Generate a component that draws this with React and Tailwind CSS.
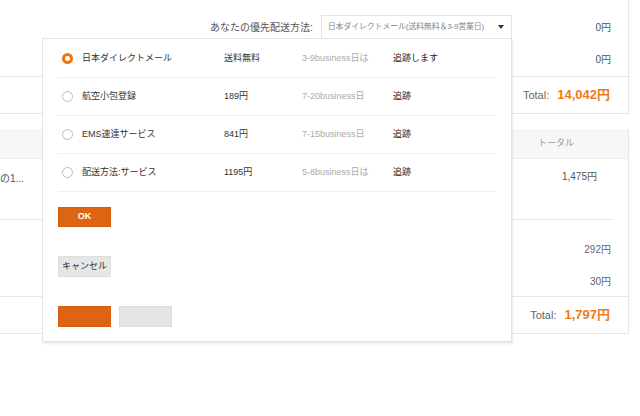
const font = { fontFamily: '"Liberation Sans", "Noto Sans CJK JP", sans-serif' };

const options = [
  { name: "日本ダイレクトメール", price: "送料無料", days: "3-9business日は", track: "追跡します", checked: true },
  { name: "航空小包登録", price: "189円", days: "7-20business日", track: "追跡" },
  { name: "EMS速達サービス", price: "841円", days: "7-15business日", track: "追跡" },
  { name: "配送方法:サービス", price: "1195円", days: "5-8business日は", track: "追跡" },
];

function Radio({ checked }) {
  if (checked) {
    return <span className="block w-[11px] h-[11px] rounded-full border-[3px] border-[#ee7611] bg-white" />;
  }
  return <span className="block w-[11px] h-[11px] rounded-full border border-[#bcbcbc] bg-white" />;
}

export default function App() {
  return (
    <div className="relative w-[640px] h-[416px] bg-white overflow-hidden text-[#333]" style={font}>
      {/* top summary box */}
      <div className="w-[629px] border-r border-b border-[#e6e6e6]">
        <div className="pt-[15px] pb-[5px] border-b border-[#e6e6e6]">
          <div className="flex items-center h-[24px]">
            <span className="ml-[210px] text-[10px] text-[#555]">あなたの優先配送方法:</span>
            <div className="ml-[8px] w-[191px] h-[24px] border border-[#e3e3e3] flex items-center pl-[6px] pr-[7px]">
              <span className="flex-1 min-w-0 overflow-hidden text-[8px] tracking-[-0.2px] text-[#888] whitespace-nowrap">日本ダイレクトメール(送料無料＆3-9営業日)</span>
              <span className="ml-[6px] shrink-0 w-0 h-0 border-l-[3px] border-r-[3px] border-t-[4px] border-l-transparent border-r-transparent border-t-[#333]" />
            </div>
            <span className="ml-auto mr-[17px] text-[10px] text-[#555]">0円</span>
          </div>
          <div className="flex items-center justify-end h-[24px] mt-[8px]">
            <span className="mr-[17px] text-[10px] text-[#555]">0円</span>
          </div>
        </div>
        <div className="h-[36px] flex items-center justify-end pr-[18px]">
          <span className="text-[11px] text-[#666]">Total:</span>
          <span className="ml-[8px] text-[13px] font-bold text-[#f07a1a]">14,042円</span>
        </div>
      </div>

      {/* order box */}
      <div className="mt-[15px] w-[629px] border-r border-b border-[#e6e6e6]">
        <div className="h-[30px] bg-[#f7f7f7] border-b border-[#ececec] flex items-center">
          <span className="ml-[538px] text-[9px] text-[#999]">トータル</span>
        </div>
        <div className="h-[61px] flex mr-[15px] border-b border-[#e6e6e6]">
          <span className="mt-[12px] text-[10px] text-[#555]">の1...</span>
          <span className="ml-auto mt-[10px] mr-[16px] text-[10px] text-[#555]">1,475円</span>
        </div>
        <div className="h-[77px] flex flex-col items-end pr-[17px] border-b border-[#e6e6e6]">
          <span className="mt-[22px] text-[10px] text-[#666]">292円</span>
          <span className="mt-[17px] text-[10px] text-[#666]">30円</span>
        </div>
        <div className="h-[36px] flex items-center justify-end pr-[18px]">
          <span className="text-[11px] text-[#666]">Total:</span>
          <span className="ml-[8px] text-[13px] font-bold text-[#f07a1a]">1,797円</span>
        </div>
      </div>

      {/* shipping dropdown panel */}
      <div className="absolute left-[42px] top-[38px] w-[470px] h-[304px] bg-white border border-[#e2e2e2] shadow-[1px_2px_2px_rgba(0,0,0,0.08)] px-[15px] pt-[1px]">
        {options.map((o) => (
          <div key={o.name} className="h-[38px] flex items-center border-b border-[#efefef] text-[9px] whitespace-nowrap">
            <div className="w-[166px] flex items-center">
              <span className="ml-[4px]"><Radio checked={o.checked} /></span>
              <span className="ml-[9px] text-[#333]">{o.name}</span>
            </div>
            <span className="w-[78px] text-[#333]">{o.price}</span>
            <span className="w-[91px] text-[#aaa]">{o.days}</span>
            <span className="text-[#222]">{o.track}</span>
          </div>
        ))}
        <button className="mt-[15px] block w-[53px] h-[20px] bg-[#dc6412] border border-[#d35e10] text-white text-[9px] font-bold">OK</button>
        <button className="mt-[29px] block w-[53px] h-[21px] bg-[#e6e6e6] border border-[#dedede] text-[#333] text-[9px]">キャンセル</button>
        <div className="mt-[29px] flex gap-[8px]">
          <span className="block w-[53px] h-[21px] bg-[#dc6412] border border-[#d35e10]" />
          <span className="block w-[53px] h-[21px] bg-[#e4e4e4] border border-[#dcdcdc]" />
        </div>
      </div>
    </div>
  );
}
